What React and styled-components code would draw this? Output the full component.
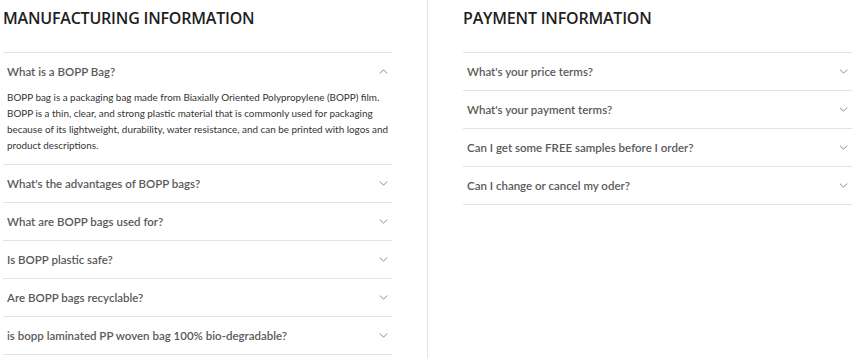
import React from 'react';
import styled, { createGlobalStyle } from 'styled-components';

const GlobalStyle = createGlobalStyle`
  body {
    margin: 0;
    background: #fff;
    font-family: Lato, "Liberation Sans", sans-serif;
  }
`;

const manufacturing = [
  {
    q: 'What is a BOPP Bag?',
    a: 'BOPP bag is a packaging bag made from Biaxially Oriented Polypropylene (BOPP) film. BOPP is a thin, clear, and strong plastic material that is commonly used for packaging because of its lightweight, durability, water resistance, and can be printed with logos and product descriptions.',
    open: true,
  },
  { q: "What's the advantages of BOPP bags?" },
  { q: 'What are BOPP bags used for?' },
  { q: 'Is BOPP plastic safe?' },
  { q: 'Are BOPP bags recyclable?' },
  { q: 'is bopp laminated PP woven bag 100% bio-degradable?' },
];

const payment = [
  { q: "What's your price terms?" },
  { q: "What's your payment terms?" },
  { q: 'Can I get some FREE samples before I order?' },
  { q: 'Can I change or cancel my oder?' },
];

function Chevron({ up }) {
  return (
    <Icon viewBox="0 0 9 5" width="9" height="5">
      <path
        d={up ? 'M0.8 4.5 L4.5 0.8 L8.2 4.5' : 'M0.8 0.5 L4.5 4.2 L8.2 0.5'}
        fill="none"
        stroke="#8a8a8a"
        strokeWidth="1"
      />
    </Icon>
  );
}

function FaqList({ items }) {
  return (
    <List>
      {items.map(item => (
        <Item key={item.q}>
          <Question>
            <span>{item.q}</span>
            <Chevron up={item.open} />
          </Question>
          {item.open && <Answer>{item.a}</Answer>}
        </Item>
      ))}
    </List>
  );
}

export default function App() {
  return (
    <Page>
      <GlobalStyle />
      <LeftColumn>
        <Section>
          <Heading>MANUFACTURING INFORMATION</Heading>
          <FaqList items={manufacturing} />
        </Section>
      </LeftColumn>
      <RightColumn>
        <Section>
          <Heading>PAYMENT INFORMATION</Heading>
          <FaqList items={payment} />
        </Section>
      </RightColumn>
    </Page>
  );
}

const Page = styled.div`
  display: flex;
  width: 863px;
  height: 358px;
  overflow: hidden;
`;

const LeftColumn = styled.div`
  width: 428px;
  padding-left: 3px;
  box-sizing: border-box;
  border-right: 1px solid #e6e6e6;
`;

const RightColumn = styled.div`
  padding-left: 35px;
`;

const Section = styled.div`
  width: 389px;
`;

const Heading = styled.h2`
  margin: 0;
  height: 52px;
  padding-top: 8px;
  box-sizing: border-box;
  font-family: "Open Sans", sans-serif;
  font-size: 16px;
  font-weight: 600;
  letter-spacing: -0.2px;
  line-height: 20px;
  color: #1e1e1e;
`;

const List = styled.div`
  border-top: 1px solid #e2e2e2;
`;

const Item = styled.div`
  border-bottom: 1px solid #e2e2e2;
`;

const Question = styled.div`
  display: flex;
  align-items: center;
  justify-content: space-between;
  height: 37px;
  padding: 0 4px 0 4px;
  font-size: 11.5px;
  font-weight: 600;
  color: #5a5a5a;
`;

const Icon = styled.svg`
  display: block;
  flex-shrink: 0;
`;

const Answer = styled.p`
  margin: -1px 0 0;
  padding: 0 0 11px 4px;
  font-size: 9.9px;
  line-height: 16px;
  color: #333;
`;
